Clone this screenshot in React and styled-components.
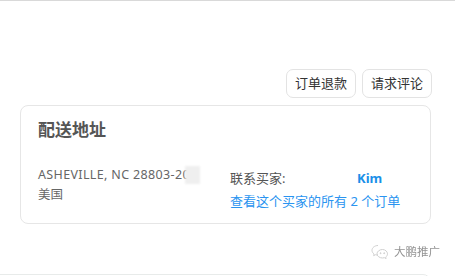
import React from "react";
import styled, { createGlobalStyle } from "styled-components";

const Global = createGlobalStyle`
  html, body { margin: 0; padding: 0; background: #fff; }
  body {
    font-family: "Noto Sans", "Noto Sans CJK SC", sans-serif;
    color: #333;
    overflow: hidden;
  }
  * { box-sizing: border-box; }
`;

const Page = styled.div`
  position: relative;
  width: 455px;
  height: 276px;
  overflow: hidden;
`;

const TopRule = styled.div`
  height: 1px;
  background: #d9d9d9;
`;

const Toolbar = styled.div`
  display: flex;
  justify-content: flex-end;
  gap: 6px;
  margin-top: 68px;
  padding-right: 23px;
`;

const Button = styled.button`
  height: 29px;
  padding: 0 8px;
  border: 1px solid #e3e3e3;
  border-radius: 7px;
  background: #fff;
  color: #333;
  font-family: inherit;
  font-size: 13px;
  line-height: 27px;
  cursor: pointer;
`;

const Card = styled.section`
  margin: 7px 24px 0 20px;
  height: 119px;
  border: 1px solid #e6e6e6;
  border-radius: 8px;
  padding: 12px 17px;
`;

const Title = styled.h2`
  margin: 0;
  font-size: 17px;
  line-height: 24px;
  font-weight: 700;
  color: #555;
`;

const Body = styled.div`
  display: grid;
  grid-template-columns: 192px 1fr;
  margin-top: 23px;
`;

const Address = styled.div`
  font-size: 12.5px;
  line-height: 20px;
  color: #666;
`;

const Street = styled.div`
  letter-spacing: 0.35px;
  white-space: nowrap;
`;

const Redact = styled.span`
  display: inline-block;
  width: 15px;
  height: 18px;
  margin-left: -5px;
  vertical-align: -5px;
  background: #efefef;
  filter: blur(1px);
`;

const Contact = styled.div`
  padding-top: 2px;
  font-size: 13px;
  line-height: 23px;
`;

const ContactRow = styled.div`
  display: flex;
`;

const Label = styled.span`
  width: 127px;
  color: #555;
`;

const BuyerName = styled.span`
  color: #1a8fe8;
  font-weight: 700;
`;

const OrdersLink = styled.a`
  display: block;
  color: #2a94f0;
  text-decoration: none;
`;

const Watermark = styled.div`
  position: absolute;
  left: 371px;
  top: 243px;
  display: flex;
  align-items: center;
  gap: 5px;
  font-size: 11.5px;
  color: #666;
  opacity: 0.7;
  filter: blur(0.3px);
`;

const NextCard = styled.section`
  margin: 50px 24px 0 -8px;
  height: 40px;
  border: 1px solid #e8ebea;
  border-radius: 8px;
`;

function WeChatMark() {
  return (
    <svg width="18" height="15" viewBox="0 0 18 15" fill="none" stroke="#bbb" strokeWidth="1">
      <path d="M7 1.5c-3.3 0-6 2.2-6 4.8 0 1.5.8 2.8 2.1 3.7l-.5 1.7 2-1c.8.3 1.6.4 2.4.4" />
      <path d="M11.5 5.5c-3 0-5.5 2-5.5 4.3s2.5 4.2 5.5 4.2c.7 0 1.3-.1 1.9-.3l1.7.9-.4-1.5c1.1-.8 1.8-2 1.8-3.3 0-2.3-2.4-4.3-5-4.3z" />
      <circle cx="9.6" cy="9.2" r=".5" fill="#bbb" />
      <circle cx="13.2" cy="9.2" r=".5" fill="#bbb" />
    </svg>
  );
}

export default function App() {
  return (
    <Page>
      <Global />
      <TopRule />
      <Toolbar>
        <Button>订单退款</Button>
        <Button>请求评论</Button>
      </Toolbar>
      <Card>
        <Title>配送地址</Title>
        <Body>
          <Address>
            <Street>
              ASHEVILLE, NC 28803-20<Redact />
            </Street>
            <div>美国</div>
          </Address>
          <Contact>
            <ContactRow>
              <Label>联系买家:</Label>
              <BuyerName>Kim</BuyerName>
            </ContactRow>
            <OrdersLink href="#">查看这个买家的所有 2 个订单</OrdersLink>
          </Contact>
        </Body>
      </Card>
      <NextCard />
      <Watermark>
        <WeChatMark />
        <span>大鹏推广</span>
      </Watermark>
    </Page>
  );
}
